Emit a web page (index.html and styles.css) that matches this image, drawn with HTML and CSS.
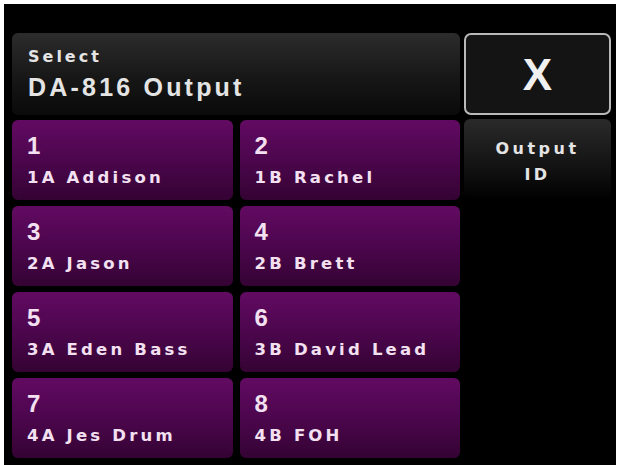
FILE: index.html
```html
<!DOCTYPE html>
<html lang="en">
<head>
  <meta charset="UTF-8" />
  <title>Select DA-816 Output</title>
  <link rel="stylesheet" href="styles.css">
</head>
<body>
  <div class="screen">
    <div class="main">
      <!-- Title bar -->
      <div class="header">
        <div class="header-small">Select</div>
        <div class="header-title">DA-816 Output</div>
      </div>

      <!-- Output buttons -->
      <div class="grid">
        <button class="output"><span class="num">1</span><span class="name">1A Addison</span></button>
        <button class="output"><span class="num">2</span><span class="name">1B Rachel</span></button>
        <button class="output"><span class="num">3</span><span class="name">2A Jason</span></button>
        <button class="output"><span class="num">4</span><span class="name">2B Brett</span></button>
        <button class="output"><span class="num">5</span><span class="name">3A Eden Bass</span></button>
        <button class="output"><span class="num">6</span><span class="name">3B David Lead</span></button>
        <button class="output"><span class="num">7</span><span class="name">4A Jes Drum</span></button>
        <button class="output"><span class="num">8</span><span class="name">4B FOH</span></button>
      </div>
    </div>

    <div class="side">
      <button class="close">X</button>
      <button class="side-btn">Output<br>ID</button>
    </div>
  </div>
</body>
</html>
```

FILE: styles.css
```css
body {
  margin: 0;
  background: #fff;
}
.screen {
  margin: 4px 1px 0 4px;
  height: 461px;
  background: #000;
  display: flex;
  gap: 4px;
  padding: 29px 5px 0 8px;
  box-sizing: border-box;
}
.main {
  width: 448px;
  display: flex;
  flex-direction: column;
  gap: 5px;
}
.header {
  height: 82px;
  border-radius: 6px;
  background: linear-gradient(#2c2c2c, #151515 60%, #0a0a0a);
  padding: 14px 0 0 16px;
  box-sizing: border-box;
  color: #e4e4e4;
}
.header-small {
  font-family: "DejaVu Sans", sans-serif;
  font-weight: bold;
  font-size: 16px;
  letter-spacing: 3px;
  line-height: 20px;
}
.header-title {
  font-family: "Liberation Sans", sans-serif;
  font-weight: bold;
  font-size: 25px;
  letter-spacing: 3.2px;
  line-height: 32px;
  margin-top: 4px;
}
.grid {
  display: grid;
  grid-template-columns: 1fr 1fr;
  grid-auto-rows: 80px;
  gap: 6px 7px;
}
button {
  border: none;
  margin: 0;
  cursor: pointer;
}
.output {
  border-radius: 6px;
  background: linear-gradient(#620a62, #4c064d 50%, #340333);
  color: #f3e0f1;
  text-align: left;
  padding: 13px 0 0 15px;
  display: flex;
  flex-direction: column;
}
.num {
  font-family: "Liberation Sans", sans-serif;
  font-weight: bold;
  font-size: 24px;
  line-height: 26px;
}
.name {
  font-family: "DejaVu Sans", sans-serif;
  font-weight: bold;
  font-size: 16.5px;
  letter-spacing: 3.2px;
  line-height: 20px;
  margin-top: 9px;
}
.side {
  width: 147px;
  display: flex;
  flex-direction: column;
  gap: 4px;
}
.close {
  height: 82px;
  border: 2px solid #b8b8b8;
  border-radius: 7px;
  background: #141414;
  color: #f0f0f0;
  font-family: "Liberation Sans", sans-serif;
  font-weight: bold;
  font-size: 44px;
  padding: 2px 0 0;
}
.side-btn {
  height: 81px;
  border-radius: 6px;
  background: linear-gradient(#2a2a2a, #121212 60%, #000);
  color: #e4e4e4;
  font-family: "DejaVu Sans", sans-serif;
  font-weight: bold;
  font-size: 16px;
  letter-spacing: 3.5px;
  line-height: 26px;
  padding: 4px 0 0;
}
```
